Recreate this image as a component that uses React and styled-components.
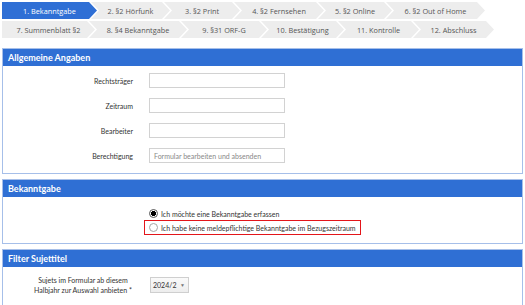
import React from 'react';
import styled, { createGlobalStyle } from 'styled-components';

const Global = createGlobalStyle`
  body {
    margin: 0;
    background: #ffffff;
  }
`;

const Page = styled.div`
  width: 521px;
  padding: 2px 2px 0 2px;
  font-family: Lato, "Open Sans", sans-serif;
  color: #333;
`;

const Steps = styled.div`
  display: flex;
  flex-direction: column;
  gap: 2px;
`;

const StepRow = styled.div`
  display: flex;
  height: 17px;
`;

const Step = styled.div`
  flex: none;
  width: ${(p) => p.w}px;
  margin-left: ${(p) => (p.first ? 0 : -6)}px;
  display: flex;
  align-items: center;
  justify-content: center;
  font-family: "Open Sans", sans-serif;
  font-size: 7.3px;
  white-space: nowrap;
  background: ${(p) => (p.active ? '#2f6fd5' : '#ededed')};
  color: ${(p) => (p.active ? '#fff' : '#555')};
  clip-path: ${(p) =>
    p.first
      ? 'polygon(0 0, calc(100% - 8px) 0, 100% 50%, calc(100% - 8px) 100%, 0 100%)'
      : 'polygon(0 0, calc(100% - 8px) 0, 100% 50%, calc(100% - 8px) 100%, 0 100%, 8px 50%)'};
`;

const Panel = styled.section`
  margin-top: ${(p) => p.gap}px;
  border: 1px solid #a6bfe9;
`;

const PanelHead = styled.div`
  height: 17px;
  display: flex;
  align-items: center;
  padding-left: 5px;
  background: #2f6fd4;
  color: #fff;
  font-weight: 700;
  font-size: 9px;
`;

const FieldList = styled.div`
  display: flex;
  flex-direction: column;
  gap: 10px;
  padding: 7px 0 10px 0;
`;

const Field = styled.div`
  display: grid;
  grid-template-columns: 130px 136px;
  column-gap: 16px;
  align-items: center;
`;

const Label = styled.div`
  text-align: ${(p) => p.align || 'right'};
  font-size: 7px;
  line-height: 10px;
  color: #333;
`;

const Input = styled.div`
  box-sizing: border-box;
  height: 15px;
  border: 1px solid #d2d2d2;
  background: #fff;
  display: flex;
  align-items: center;
  padding-left: 4px;
  font-size: 7px;
  color: #888;
`;

const RadioList = styled.div`
  display: flex;
  flex-direction: column;
  align-items: flex-start;
  padding: 10px 0 8px 141px;
`;

const Choice = styled.label`
  box-sizing: border-box;
  display: flex;
  align-items: center;
  gap: 3px;
  height: ${(p) => (p.marked ? 15 : 13)}px;
  padding: 0 4px;
  border: 1.5px solid ${(p) => (p.marked ? '#e3151a' : 'transparent')};
  font-size: 7px;
  color: #333;
`;

const Dot = styled.span`
  box-sizing: border-box;
  width: 9px;
  height: 9px;
  border-radius: 50%;
  border: 1px solid ${(p) => (p.on ? '#555' : '#a5a5a5')};
  background: ${(p) =>
    p.on ? 'radial-gradient(circle, #000 0 2.3px, #fff 2.8px)' : '#fff'};
`;

const FilterRow = styled.div`
  display: grid;
  grid-template-columns: 118px 39px;
  column-gap: 8px;
  align-items: center;
  padding: 8px 0 12px 21px;
`;

const Select = styled.div`
  box-sizing: border-box;
  height: 16px;
  border: 1px solid #cfcfcf;
  background: linear-gradient(#fafafa, #ededed);
  display: flex;
  align-items: center;
  justify-content: space-between;
  padding: 0 3px 0 2px;
  font-size: 7px;
  color: #333;
`;

const Caret = styled.span`
  font-size: 5px;
  color: #777;
`;

const rows = [
  [
    ['1. Bekanntgabe', 95],
    ['2. §2 Hörfunk', 79],
    ['3. §2 Print', 76],
    ['4. §2 Fernsehen', 90],
    ['5. §2 Online', 74],
    ['6. §2 Out of Home', 99],
  ],
  [
    ['7. Summenblatt §2', 93],
    ['8. §4 Bekanntgabe', 98],
    ['9. §31 ORF-G', 86],
    ['10. Bestätigung', 83],
    ['11. Kontrolle', 81],
    ['12. Abschluss', 81],
  ],
];

const fields = [
  ['Rechtsträger', ''],
  ['Zeitraum', ''],
  ['Bearbeiter', ''],
  ['Berechtigung', 'Formular bearbeiten und absenden'],
];

export default function App() {
  return (
    <Page>
      <Global />
      <Steps>
        {rows.map((row, r) => (
          <StepRow key={r}>
            {row.map(([name, w], i) => (
              <Step key={name} w={w} first={i === 0} active={r === 0 && i === 0}>
                {name}
              </Step>
            ))}
          </StepRow>
        ))}
      </Steps>

      <Panel gap={10}>
        <PanelHead>Allgemeine Angaben</PanelHead>
        <FieldList>
          {fields.map(([label, value]) => (
            <Field key={label}>
              <Label>{label}</Label>
              <Input>{value}</Input>
            </Field>
          ))}
        </FieldList>
      </Panel>

      <Panel gap={5}>
        <PanelHead>Bekanntgabe</PanelHead>
        <RadioList>
          <Choice>
            <Dot on />
            Ich möchte eine Bekanntgabe erfassen
          </Choice>
          <Choice marked>
            <Dot />
            Ich habe keine meldepflichtige Bekanntgabe im Bezugszeitraum
          </Choice>
        </RadioList>
      </Panel>

      <Panel gap={5}>
        <PanelHead>Filter Sujettitel</PanelHead>
        <FilterRow>
          <Label align="center">
            Sujets im Formular ab diesem
            <br />
            Halbjahr zur Auswahl anbieten *
          </Label>
          <Select>
            2024/2 <Caret>▼</Caret>
          </Select>
        </FilterRow>
      </Panel>
    </Page>
  );
}
